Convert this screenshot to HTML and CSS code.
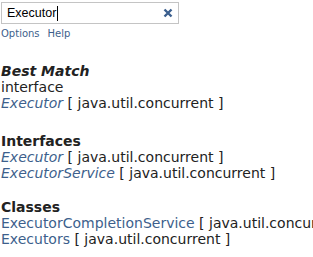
FILE: index.html
```html
<!DOCTYPE html>
<html lang="en">
  <head>
    <meta charset="UTF-8" />
    <title>Search</title>
    <link rel="stylesheet" href="styles.css">
  </head>
  <body>
    <div class="search">
      <div class="box">
        <span class="query">Executor</span><span class="caret"></span>
        <svg class="clear" width="10" height="10" viewBox="0 0 10 10">
          <path d="M1.5 1.5 L8.5 8.5 M8.5 1.5 L1.5 8.5" stroke="#3b5f8e" stroke-width="2.4" />
        </svg>
      </div>
      <div class="links">
        <a href="#">Options</a>
        <a href="#">Help</a>
      </div>
    </div>

    <div class="results">
      <div class="group first">
        <div class="title best">Best Match</div>
        <div>interface</div>
        <div><a class="iface" href="#">Executor</a> [ java.util.concurrent ]</div>
      </div>
      <div class="group second">
        <div class="title">Interfaces</div>
        <div><a class="iface" href="#">Executor</a> [ java.util.concurrent ]</div>
        <div><a class="iface" href="#">ExecutorService</a> [ java.util.concurrent ]</div>
      </div>
      <div class="group">
        <div class="title">Classes</div>
        <div><a href="#">ExecutorCompletionService</a> [ java.util.concurrent ]</div>
        <div><a href="#">Executors</a> [ java.util.concurrent ]</div>
      </div>
    </div>
  </body>
</html>
```

FILE: styles.css
```css
body {
  margin: 0;
  padding: 2px 0 0 1px;
  font-family: "DejaVu Sans", sans-serif;
  color: #222;
  background: #fff;
  overflow: hidden;
}

a {
  color: #3d5f8c;
  text-decoration: none;
}

.box {
  display: flex;
  align-items: center;
  width: 171px;
  height: 20px;
  border: 1px solid #c4c4c4;
  padding-left: 5px;
  font-family: "Liberation Sans", Arial, sans-serif;
  font-size: 12.5px;
  color: #000;
}

.caret {
  display: inline-block;
  width: 1px;
  height: 15px;
  margin-left: 1px;
  background: #000;
}

.clear {
  margin-left: auto;
  margin-right: 5px;
}

.links {
  font-size: 10px;
  padding: 4px 0 0 0;
  display: flex;
  gap: 8px;
}

.results {
  font-size: 14px;
  line-height: 16px;
  white-space: nowrap;
}

.group {
  margin-top: 18px;
}

.group.first {
  margin-top: 24px;
}

.group.second {
  margin-top: 22px;
}

.title {
  font-weight: bold;
}

.best {
  font-style: italic;
}

.iface {
  font-style: italic;
}
```
